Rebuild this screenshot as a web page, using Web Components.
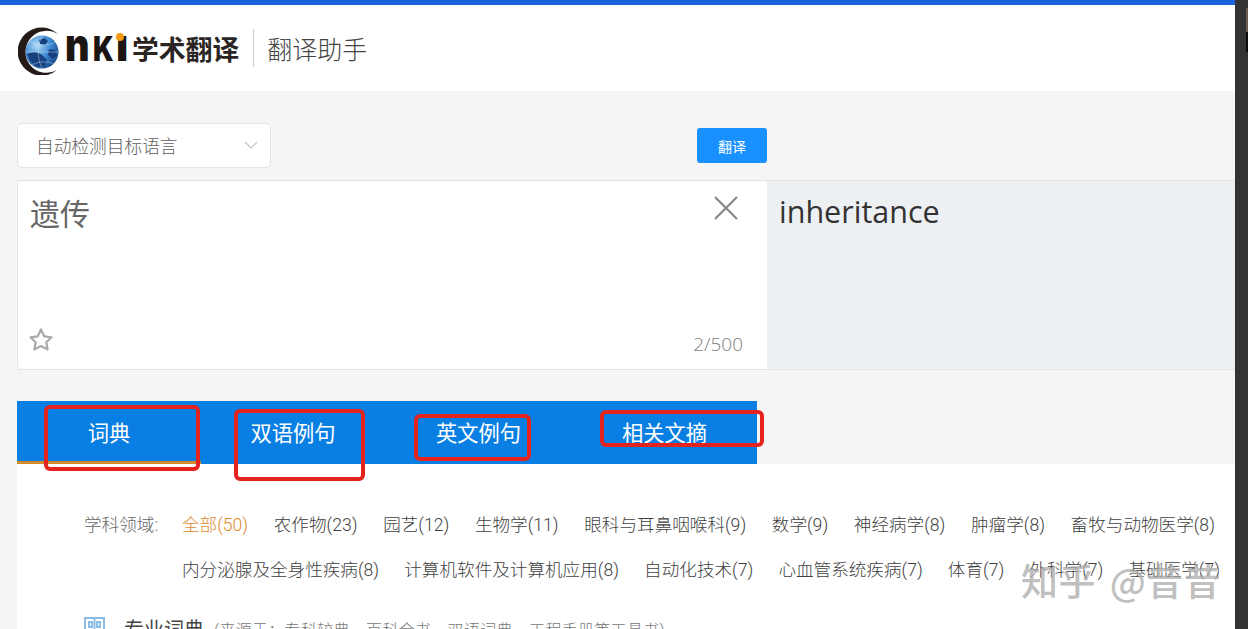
<!DOCTYPE html>
<html lang="zh">
<head>
<meta charset="utf-8">
<title>翻译助手</title>
<style>
  html, body { margin: 0; height: 629px; overflow: hidden; background: #f5f5f5; }
  body { font-family: "Noto Sans CJK SC", "Liberation Sans", sans-serif; }
</style>
</head>
<body>
<cnki-app>
  <cnki-header></cnki-header>
  <cnki-translator></cnki-translator>
  <cnki-tabs></cnki-tabs>
  <cnki-results></cnki-results>
</cnki-app>

<script>
const CJK = '"Noto Sans CJK SC", "Liberation Sans", sans-serif';
const LATIN_CJK = 'Roboto, "Noto Sans CJK SC", sans-serif';

class CnkiApp extends HTMLElement {
  constructor() {
    super();
    this.attachShadow({ mode: "open" });
    this.shadowRoot.innerHTML = `
      <style>
        :host { display: flex; width: 1248px; height: 629px; overflow: hidden; position: relative; font-family: ${CJK}; }
        .page { width: 1235px; flex: none; background: #f5f5f5; display: flex; flex-direction: column; overflow: hidden; }
        .strip { flex: 1; background: #333333; }
        .blob { position: absolute; left: 1246px; top: 8px; width: 2px; height: 44px; background: linear-gradient(#6b5650 0 55%, #0c0c0c 55%); }
        .mark { position: absolute; left: 1021px; top: 555px; font-size: 37px; line-height: 50px; color: rgba(150,150,150,.62); white-space: nowrap; font-weight: 500; letter-spacing: .5px; word-spacing: 5px; text-shadow: 1px 1px 0 rgba(255,255,255,.6); }
        .note { position: absolute; border: 4px solid #e4231f; border-radius: 6px; box-sizing: border-box; }
      </style>
      <div class="page"><slot></slot></div>
      <div class="strip"></div>
      <div class="blob"></div>
      <div class="note" style="left:44px;top:405px;width:156px;height:66px"></div>
      <div class="note" style="left:234px;top:409px;width:131px;height:72px"></div>
      <div class="note" style="left:414px;top:414px;width:117px;height:47px"></div>
      <div class="note" style="left:600px;top:410px;width:164px;height:37px"></div>
      <div class="mark">知乎 @昔昔</div>
    `;
  }
}

class CnkiHeader extends HTMLElement {
  constructor() {
    super();
    this.attachShadow({ mode: "open" });
    this.shadowRoot.innerHTML = `
      <style>
        :host { display: flex; flex: none; align-items: center; height: 86px; background: #fff; border-top: 5px solid #1a62dc; padding-left: 18px; }
        svg { display: block; flex: none; margin-top: 6px; }
        .nki { display: flex; align-items: baseline; width: 60px; margin: -3px 0 0 1px; line-height: 44px; position: relative; font-family: Inter, "Liberation Sans", sans-serif; font-weight: 900; color: #1c1512; }
        .nki span { display: block; transform-origin: 0 100%; }
        .n { width: 28px; font-size: 46px; transform: scaleX(.82); }
        .k { width: 23px; font-size: 34px; transform: scaleX(.8); }
        .i { width: 9px; font-size: 46px; transform: scaleX(.9); }
        .nki i { position: absolute; left: 51px; top: 11px; width: 8px; height: 8px; border-radius: 50%; background: #f29a12; }
        .brand { font-size: 26.800px; font-weight: 700; color: #2a2522; margin-left: 7px; white-space: nowrap; }
        .sep { width: 1px; height: 38px; background: #c9c9c9; margin: 0 13px 0 14px; }
        .title { font-size: 25px; color: #444; font-weight: 300; white-space: nowrap; }
      </style>
      <svg width="46" height="48" viewBox="0 0 46 48">
        <defs>
          <radialGradient id="g" cx=".35" cy=".3" r=".8">
            <stop offset="0" stop-color="#b5dcf5"/>
            <stop offset=".5" stop-color="#3f8bd6"/>
            <stop offset="1" stop-color="#123f80"/>
          </radialGradient>
        </defs>
        <circle cx="24" cy="25" r="16.500" fill="url(#g)"/>
        <path d="M9 27c6-3 12-2 15 1l5 5-3 7-8-1-6-5zM21 13l6-2 3 3-3 4-5-1zM31 22l6 1 2 6-5 3-4-4z" fill="#17407f"/>
        <path d="M12 14c8 5 18 5 26 1M8 25h32M14 38c7-4 15-4 22-1M24 9c-5 10-5 22 0 32" fill="none" stroke="#cfe6f7" stroke-width=".6" opacity=".7"/>
        <path d="M41 8A24 24 0 1 0 39 43A21 21 0 1 1 41 8z" fill="#241b18"/>
      </svg>
      <div class="nki"><span class="n">n</span><span class="k">K</span><span class="i">ı</span><i></i></div>
      <span class="brand">学术翻译</span>
      <span class="sep"></span>
      <span class="title">翻译助手</span>
    `;
  }
}

class CnkiTranslator extends HTMLElement {
  constructor() {
    super();
    this.attachShadow({ mode: "open" });
    this.shadowRoot.innerHTML = `
      <style>
        :host { display: block; flex: none; padding: 32px 0 31px 17px; }
        .bar { display: flex; align-items: center; height: 45px; margin-bottom: 12px; }
        .select { width: 254px; height: 45px; box-sizing: border-box; background: #fff; border: 1px solid #e4e4e4; border-radius: 5px; display: flex; align-items: center; justify-content: space-between; padding: 0 12px 2px 18px; font-size: 17.700px; font-weight: 300; color: #5f5f5f; }
        .btn { margin-left: 426px; width: 70px; height: 35px; background: #1890ff; color: #fff; border-radius: 3px; font-size: 14px; display: flex; align-items: center; justify-content: center; }
        .panel { display: flex; height: 190px; box-sizing: border-box; border-top: 1px solid #e2e2e2; border-bottom: 1px solid #e4e4e4; }
        .src { width: 750px; box-sizing: border-box; background: #fff; border-left: 1px solid #e4e4e4; border-radius: 5px 0 0 5px; display: flex; flex-direction: column; padding: 9px 24px 0 12px; }
        .top { display: flex; justify-content: space-between; align-items: flex-start; }
        .txt { font-size: 30px; line-height: 44px; color: #666; }
        .close { margin: 6px 5px 0 0; }
        .foot { margin-top: auto; display: flex; justify-content: space-between; align-items: flex-end; padding-bottom: 12px; }
        .foot svg { margin: 0 0 5px -2px; }
        .count { font-size: 19px; font-weight: 300; color: #808080; line-height: 26px; font-family: "Open Sans", sans-serif; }
        .dst { flex: 1; background: #edf0f3; padding: 8px 0 0 12px; font: 400 30.500px/44px "Open Sans", sans-serif; color: #333; }
        svg { display: block; }
      </style>
      <div class="bar">
        <div class="select">自动检测目标语言
          <svg width="14" height="8" viewBox="0 0 14 8"><path d="M1 1l6 6 6-6" fill="none" stroke="#c4c4c4" stroke-width="1.200"/></svg>
        </div>
        <div class="btn">翻译</div>
      </div>
      <div class="panel">
        <div class="src">
          <div class="top">
            <div class="txt">遗传</div>
            <svg class="close" width="24" height="24" viewBox="0 0 24 24"><path d="M1 1l22 22M23 1L1 23" stroke="#888" stroke-width="2.200" fill="none"/></svg>
          </div>
          <div class="foot">
            <svg width="26" height="25" viewBox="0 0 26 25"><path d="M13 2.500l3.300 6.800 7.200 1-5.200 5 1.300 7.200L13 19l-6.600 3.500 1.300-7.200-5.200-5 7.200-1z" fill="none" stroke="#aaa" stroke-width="2.200" stroke-linejoin="round"/></svg>
            <span class="count">2/500</span>
          </div>
        </div>
        <div class="dst">inheritance</div>
      </div>
    `;
  }
}

class CnkiTabs extends HTMLElement {
  constructor() {
    super();
    this.attachShadow({ mode: "open" });
    const tabs = [["词典", 184, true], ["双语例句", 184], ["英文例句", 187], ["相关文摘", 185]];
    this.shadowRoot.innerHTML = `
      <style>
        :host { display: flex; flex: none; width: 740px; height: 63px; margin-left: 17px; background: #0a7fe3; color: #fff; font-size: 21.300px; }
        div { box-sizing: border-box; height: 63px; line-height: 61px; text-align: center; white-space: nowrap; }
        .on { border-bottom: 3px solid #d08a2c; }
      </style>
      ${tabs.map(([t, w, on]) => `<div class="${on ? "on" : ""}" style="width:${w}px">${t}</div>`).join("")}
    `;
  }
}

class CnkiResults extends HTMLElement {
  constructor() {
    super();
    this.attachShadow({ mode: "open" });
    const row1 = ["农作物(23)", "园艺(12)", "生物学(11)", "眼科与耳鼻咽喉科(9)", "数学(9)", "神经病学(8)", "肿瘤学(8)", "畜牧与动物医学(8)"];
    const row2 = ["内分泌腺及全身性疾病(8)", "计算机软件及计算机应用(8)", "自动化技术(7)", "心血管系统疾病(7)", "体育(7)", "外科学(7)", "基础医学(7)"];
    const span = (s) => `<span>${s}</span>`;
    this.shadowRoot.innerHTML = `
      <style>
        :host { display: block; flex: 1; margin-left: 17px; background: #fff; padding: 39px 0 0 67px; font-family: ${LATIN_CJK}; font-size: 17.600px; font-weight: 300; color: #3f3f3f; }
        .row { display: flex; height: 45px; line-height: 45px; white-space: nowrap; }
        .label { width: 98px; color: #666; flex: none; }
        .items { display: flex; gap: 25.700px; }
        .items.tight { gap: 25.200px; }
        .cur { color: #dd8a2e; }
        .head { display: flex; align-items: center; margin-top: 21px; white-space: nowrap; }
        .head svg { margin: -2px 19px 0 0; flex: none; }
        .name { font-size: 20px; color: #444; font-weight: 400; }
        .src { font-size: 16px; letter-spacing: .3px; color: #777; margin-left: 10px; }
      </style>
      <div class="row">
        <div class="label">学科领域:</div>
        <div class="items"><span class="cur">全部(50)</span>${row1.map(span).join("")}</div>
      </div>
      <div class="row">
        <div class="label"></div>
        <div class="items tight">${row2.map(span).join("")}</div>
      </div>
      <div class="head">
        <svg width="21" height="22" viewBox="0 0 21 22"><path d="M1 1h19v20H1zM10.500 1v20M5 5h3v5H5zM13 5h3v5h-3z" fill="none" stroke="#8dbde6" stroke-width="2"/></svg>
        <span class="name">专业词典</span>
        <span class="src">(来源于&#xFF1A;专科较典、百科全书、双语词典、工程手册等工具书)</span>
      </div>
    `;
  }
}

customElements.define("cnki-app", CnkiApp);
customElements.define("cnki-header", CnkiHeader);
customElements.define("cnki-translator", CnkiTranslator);
customElements.define("cnki-tabs", CnkiTabs);
customElements.define("cnki-results", CnkiResults);
</script>
</body>
</html>
